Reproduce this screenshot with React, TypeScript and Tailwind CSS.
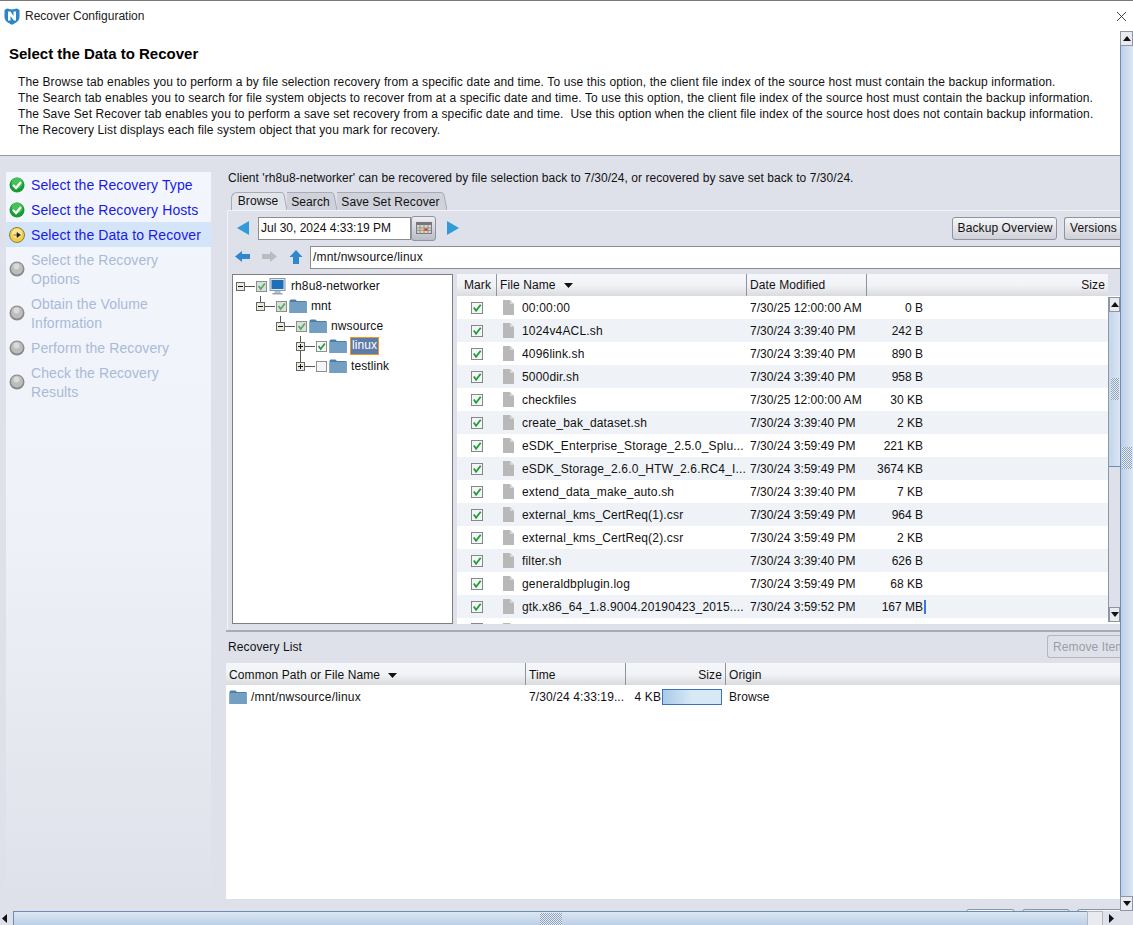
import type { ReactNode } from "react";
import { X } from "lucide-react";

const files = [
  ["00:00:00", "7/30/25 12:00:00 AM", "0 B"],
  ["1024v4ACL.sh", "7/30/24 3:39:40 PM", "242 B"],
  ["4096link.sh", "7/30/24 3:39:40 PM", "890 B"],
  ["5000dir.sh", "7/30/24 3:39:40 PM", "958 B"],
  ["checkfiles", "7/30/25 12:00:00 AM", "30 KB"],
  ["create_bak_dataset.sh", "7/30/24 3:39:40 PM", "2 KB"],
  ["eSDK_Enterprise_Storage_2.5.0_Splu...", "7/30/24 3:59:49 PM", "221 KB"],
  ["eSDK_Storage_2.6.0_HTW_2.6.RC4_I...", "7/30/24 3:59:49 PM", "3674 KB"],
  ["extend_data_make_auto.sh", "7/30/24 3:39:40 PM", "7 KB"],
  ["external_kms_CertReq(1).csr", "7/30/24 3:59:49 PM", "964 B"],
  ["external_kms_CertReq(2).csr", "7/30/24 3:59:49 PM", "2 KB"],
  ["filter.sh", "7/30/24 3:39:40 PM", "626 B"],
  ["generaldbplugin.log", "7/30/24 3:59:49 PM", "68 KB"],
  ["gtk.x86_64_1.8.9004.20190423_2015....", "7/30/24 3:59:52 PM", "167 MB"],
];

const steps = [
  { label: "Select the Recovery Type", state: "done", h: "h-[25px]" },
  { label: "Select the Recovery Hosts", state: "done", h: "h-[25px]" },
  { label: "Select the Data to Recover", state: "current", h: "h-[25px]" },
  { label: "Select the Recovery Options", state: "todo", h: "h-[44px]" },
  { label: "Obtain the Volume Information", state: "todo", h: "h-[44px]" },
  { label: "Perform the Recovery", state: "todo", h: "h-[25px]" },
  { label: "Check the Recovery Results", state: "todo", h: "h-[44px]" },
];

function Logo() {
  return (
    <svg width="16" height="17" viewBox="0 0 16 17">
      <path d="M0.5 2 L3 0.5 L8 1.5 L13 0.5 L15.5 2 V9 C15.5 13 11 15.5 8 16.8 C5 15.5 0.5 13 0.5 9 Z" fill="#2a86c4" />
      <path d="M4 12.5 V3.5 H6.5 L9.5 8 V3.5 H12 V12.5 H9.8 L6.5 8 V12.5 Z" fill="#fff" />
    </svg>
  );
}

function StepIcon({ state }: { state: string }) {
  if (state === "done") {
    return (
      <svg width="16" height="16" viewBox="0 0 16 16">
        <circle cx="8" cy="8" r="7.5" fill="#1a9a35" />
        <circle cx="8" cy="6" r="5.5" fill="#48c258" />
        <path d="M4 8 L7 11 L12 5" stroke="#fff" strokeWidth="2.2" fill="none" />
      </svg>
    );
  }
  if (state === "current") {
    return (
      <svg width="16" height="16" viewBox="0 0 16 16">
        <circle cx="8" cy="8" r="7.5" fill="#f4cb4a" stroke="#8a7a45" strokeWidth="1" />
        <circle cx="8" cy="6.5" r="5" fill="#fbe58c" />
        <path d="M4.5 8 H8 V5.5 L11.5 8 L8 10.5 V8" fill="#222" stroke="#222" strokeWidth="0.6" />
      </svg>
    );
  }
  return (
    <svg width="16" height="16" viewBox="0 0 16 16">
      <circle cx="8" cy="8" r="7.5" fill="#8a8a8a" />
      <circle cx="8" cy="7.5" r="6" fill="#bdbdbd" />
      <circle cx="7.5" cy="5.5" r="3" fill="#dadada" />
    </svg>
  );
}

function Folder() {
  return (
    <svg width="18" height="14" viewBox="0 0 18 14" className="shrink-0">
      <path d="M0.5 2 Q0.5 0.5 2 0.5 H6.5 L8 2 H17 Q17.7 2 17.7 3 V14 H0.5 Z" fill="#4d7fa6" />
      <rect x="0.5" y="3" width="17.2" height="11" fill="#739fc2" />
    </svg>
  );
}

function FileIcon() {
  return (
    <svg width="11" height="15" viewBox="0 0 11 15" className="shrink-0">
      <path d="M0 0 H7 L11 4 V15 H0 Z" fill="#b8b8b8" />
      <path d="M7 0 L11 4 H7 Z" fill="#d6d6d6" />
    </svg>
  );
}

function Check({ on = true, dim = false, size = 12 }: { on?: boolean; dim?: boolean; size?: number }) {
  return (
    <svg width={size} height={size} viewBox="0 0 13 13" className="shrink-0">
      <rect x="0.5" y="0.5" width="12" height="12" fill={dim ? "#d9dfd9" : "#f4f5f7"} stroke="#7f7f7f" />
      {on && <path d="M3 6 L5.5 9.5 L10.5 3" stroke={dim ? "#55a866" : "#1f9e35"} strokeWidth="2" fill="none" />}
    </svg>
  );
}

function Expander({ open, top = true, bottom = false }: { open: boolean; top?: boolean; bottom?: boolean }) {
  return (
    <svg width="21" height="20" viewBox="0 0 21 20" className="shrink-0">
      {top && <path d="M5.5 0 V6" stroke="#555" />}
      {bottom && <path d="M5.5 15 V20" stroke="#555" />}
      <path d="M10 10.5 H20" stroke="#555" />
      <rect x="1.5" y="6.5" width="8" height="8" fill="#eceae0" stroke="#666" />
      <path d="M3 10.5 H8" stroke="#111" />
      {!open && <path d="M5.5 8 V13" stroke="#111" />}
    </svg>
  );
}

function Tri({ dir, color }: { dir: "l" | "r"; color: string }) {
  return (
    <svg width="14" height="14" viewBox="0 0 14 14" className="shrink-0">
      <path d={dir === "l" ? "M13 0 V14 L1 7 Z" : "M1 0 V14 L13 7 Z"} fill={color} />
    </svg>
  );
}

function NavArrow({ kind }: { kind: "back" | "fwd" | "up" }) {
  const d =
    kind === "back"
      ? "M0 6.5 L7 1 V4 H15 V9 H7 V12 Z"
      : kind === "fwd"
        ? "M15 6.5 L8 1 V4 H0 V9 H8 V12 Z"
        : "M7 0 L13.5 7 H10 V14 H4 V7 H0.5 Z";
  return (
    <svg width="15" height="14" viewBox="0 0 15 14" className="shrink-0">
      <path d={d} fill={kind === "fwd" ? "#b9bcbf" : "#2f88cf"} />
    </svg>
  );
}

function TableHeadCell({ children, className = "" }: { children: ReactNode; className?: string }) {
  return <div className={`flex items-center h-full border-r border-[#8f949c] ${className}`}>{children}</div>;
}

function SortDown() {
  return (
    <svg width="9" height="5" viewBox="0 0 9 5" className="shrink-0">
      <path d="M0 0 H9 L4.5 5 Z" fill="#111" />
    </svg>
  );
}

function Grip({ className }: { className: string }) {
  return <div className={`bg-[repeating-conic-gradient(#8ea2bc_0_25%,#e6edf6_0_50%)] bg-[size:2px_2px] ${className}`} />;
}

function ArrowBtn({ up }: { up: boolean }) {
  return (
    <div className="h-[15px] shrink-0 bg-[#e9ebf0] border border-[#8e96a3] flex items-center justify-center">
      <svg width="8" height="5" viewBox="0 0 8 5">
        <path d={up ? "M0 5 H8 L4 0 Z" : "M0 0 H8 L4 5 Z"} fill="#111" />
      </svg>
    </div>
  );
}

function Tab({ label, width, active }: { label: string; width: string; active?: boolean }) {
  return (
    <div className={`flex h-[18px] ${width}`}>
      <div
        className={`flex-1 border-t border-[#a8abb3] flex items-center justify-center whitespace-nowrap pl-[3px] ${
          active ? "bg-[#e2e4eb] border-l rounded-tl-[6px] pb-[2px]" : "bg-[#cfd2da]"
        }`}
      >
        {label}
      </div>
      <svg width="6" height="18" viewBox="0 0 6 18" className="shrink-0">
        <path d="M0 0.5 Q2.5 0.5 3 3 L6 18 H0 Z" fill={active ? "#e2e4eb" : "#cfd2da"} />
        <path d="M0 0.5 Q2.5 0.5 3 3 L6 18" stroke="#a8abb3" fill="none" />
      </svg>
    </div>
  );
}

function Tree() {
  return (
    <div className="w-[221px] shrink-0 h-full bg-white border border-[#7f7f7f] pt-[1px] pl-[2px] text-[#111]">
      <div className="h-5 flex items-center">
        <Expander open top={false} />
        <Check dim size={11} />
        <svg width="17" height="17" viewBox="0 0 16 17" className="shrink-0 ml-[2px]">
          <rect x="0.5" y="0.5" width="15" height="12" fill="#dfe6ee" stroke="#8a97a6" />
          <rect x="2" y="2" width="12" height="9" fill="#1f6fb8" />
          <rect x="5" y="13" width="6" height="2" fill="#b8bec6" />
          <rect x="3" y="15" width="10" height="1.5" fill="#9aa3ae" />
        </svg>
        <span className="ml-[5px]">rh8u8-networker</span>
      </div>
      <div className="h-5 flex items-center pl-5">
        <Expander open />
        <Check dim size={11} />
        <div className="ml-[2px]">
          <Folder />
        </div>
        <span className="ml-[4px]">mnt</span>
      </div>
      <div className="h-5 flex items-center pl-10">
        <Expander open />
        <Check dim size={11} />
        <div className="ml-[2px]">
          <Folder />
        </div>
        <span className="ml-[4px]">nwsource</span>
      </div>
      <div className="h-5 flex items-center pl-[60px]">
        <Expander open={false} bottom />
        <Check size={11} />
        <div className="ml-[2px]">
          <Folder />
        </div>
        <span className="ml-[3px] px-[1px] h-[18px] leading-[15px] bg-[#5f7ca8] text-white border border-[#e89a1c]">linux</span>
      </div>
      <div className="h-5 flex items-center pl-[60px]">
        <Expander open={false} />
        <Check on={false} size={11} />
        <div className="ml-[2px]">
          <Folder />
        </div>
        <span className="ml-[4px]">testlink</span>
      </div>
    </div>
  );
}

function FileTable() {
  return (
    <div className="flex-1 flex flex-col min-w-0 h-full text-[#111] overflow-hidden">
      <div className="h-[22px] shrink-0 flex items-center bg-gradient-to-b from-[#f4f6f9] via-[#f1f3f6] to-[#d9dbdf] mr-[12px]">
        <TableHeadCell className="w-[40px] pl-[7px]">Mark</TableHeadCell>
        <TableHeadCell className="w-[250px] pl-[3px] gap-[8px]">
          File Name <SortDown />
        </TableHeadCell>
        <TableHeadCell className="w-[120px] pl-[3px]">Date Modified</TableHeadCell>
        <div className="flex-1 text-right pr-[3px]">Size</div>
      </div>
      <div className="flex flex-1 min-h-0">
        <div className="flex-1 min-w-0 overflow-hidden">
          {files.map((f, i) => (
            <div key={f[0]} className={`h-[23px] flex items-center ${i % 2 === 1 ? "bg-[#eff3f7]" : "bg-white"}`}>
              <div className="w-[39px] flex justify-center">
                <Check />
              </div>
              <div className="w-[26px] pl-[7px] flex">
                <FileIcon />
              </div>
              <div className="w-[228px] whitespace-nowrap overflow-hidden tracking-[0.17px]">{f[0]}</div>
              <div className="w-[120px] whitespace-nowrap tracking-[0.05px]">{f[1]}</div>
              <div className="w-[53px] text-right whitespace-nowrap tracking-normal">{f[2]}</div>
              {i === 13 && <div className="ml-[1px] w-[2px] h-[14px] bg-[#3b78d8]" />}
            </div>
          ))}
          <div className="h-[23px] flex bg-white pt-[5px]">
            <div className="w-[39px] flex justify-center">
              <Check />
            </div>
            <div className="pl-[7px]">
              <FileIcon />
            </div>
          </div>
        </div>
        <div className="w-[12px] shrink-0 flex flex-col bg-white pb-[2px]">
          <div className="flex-1 min-h-0 flex flex-col border-l border-[#8e96a3] mt-[1px]">
            <ArrowBtn up />
            <div className="flex-1 bg-[#dfe1ea] min-h-0 flex flex-col">
              <div className="h-[155px] bg-gradient-to-r from-[#c4d6ec] to-[#dbe6f3] border-b border-[#6d8bb3] flex flex-col items-center pt-[66px]">
                <Grip className="w-[8px] h-[22px]" />
              </div>
            </div>
            <ArrowBtn up={false} />
          </div>
        </div>
      </div>
    </div>
  );
}

export default function App() {
  return (
    <div className="w-[1133px] h-[925px] flex flex-col overflow-hidden bg-white border-t border-[#7a7a7a] font-['Liberation_Sans',Arial,sans-serif] text-[12px] text-[#111] tracking-[0.1px]">
      {/* window title */}
      <div className="h-[30px] shrink-0 flex items-center pl-[4px] pr-[3px]">
        <Logo />
        <span className="ml-[5px] text-[#222] tracking-normal">Recover Configuration</span>
        <X className="ml-auto w-[17px] h-[17px] text-[#222]" strokeWidth={1.2} />
      </div>

      <div className="flex-1 flex min-h-0">
        <div className="w-[1120px] shrink-0 flex flex-col overflow-hidden">
          {/* header text */}
          <div className="h-[125px] shrink-0 border-b border-[#9a9a9a] bg-white">
            <div className="pl-[9px] pt-[14px] text-[15px] leading-[18px] font-bold text-black tracking-normal">Select the Data to Recover</div>
            <div className="pl-[18px] pt-[11px] leading-[16px] text-[#111] whitespace-nowrap tracking-[0.115px]">
              <div>The Browse tab enables you to perform a by file selection recovery from a specific date and time. To use this option, the client file index of the source host must contain the backup information.</div>
              <div>The Search tab enables you to search for file system objects to recover from at a specific date and time. To use this option, the client file index of the source host must contain the backup information.</div>
              <div>The Save Set Recover tab enables you to perform a save set recovery from a specific date and time.&nbsp; Use this option when the client file index of the source host does not contain backup information.</div>
              <div>The Recovery List displays each file system object that you mark for recovery.</div>
            </div>
          </div>

          <div className="flex-1 flex min-h-0 bg-[#dfe1ea]">
            {/* wizard steps */}
            <div className="w-[226px] shrink-0 pl-[6px] pr-[15px] pt-[16px] pb-[5px]">
              <div className="h-full bg-gradient-to-b from-[#f3f7fd] via-[#eef1f7] to-[#dfe1ea]">
                {steps.map((s) => (
                  <div key={s.label} className={`${s.h} flex items-center pl-[3px] ${s.state === "current" ? "bg-[#d5e5f9]" : ""}`}>
                    <div className="w-[16px] shrink-0">
                      <StepIcon state={s.state} />
                    </div>
                    <div className={`ml-[6px] pt-[2px] w-[175px] text-[14px] leading-[19px] tracking-[0.1px] ${s.state === "todo" ? "text-[#a9bad8]" : "text-[#1a1ae6]"}`}>
                      {s.label}
                    </div>
                  </div>
                ))}
              </div>
            </div>

            {/* main column */}
            <div className="flex-1 min-w-0 flex flex-col">
              <div className="h-[36px] shrink-0 pl-[2px] pt-[14px] leading-[16px] tracking-[0.05px]">
                Client 'rh8u8-networker' can be recovered by file selection back to 7/30/24, or recovered by save set back to 7/30/24.
              </div>
              <div className="h-[18px] shrink-0 flex pl-[5px]">
                <Tab label="Browse" width="w-[56px]" active />
                <Tab label="Search" width="w-[50px]" />
                <Tab label="Save Set Recover" width="w-[110px]" />
              </div>

              <div className="h-[420px] shrink-0 border-t border-l border-[#f2f3f6] ml-[1px] flex flex-col">
                <div className="h-[34px] shrink-0 flex items-center pl-[8px]">
                  <Tri dir="l" color="#2f9bd8" />
                  <div className="ml-[8px] w-[153px] h-[23px] bg-white border border-[#8c8c8c] flex items-center pl-[2px] whitespace-nowrap tracking-normal">Jul 30, 2024 4:33:19 PM</div>
                  <div className="w-[25px] h-[25px] rounded-[3px] border border-[#8f949c] bg-gradient-to-b from-[#eceef2] to-[#b9bcc4] flex items-center justify-center">
                    <svg width="16" height="12" viewBox="0 0 16 12">
                      <rect x="0.5" y="0.5" width="15" height="11" fill="#d4d4d4" stroke="#777" />
                      <rect x="0" y="0" width="16" height="3" fill="#777" />
                      <path d="M0 6 H16 M0 8.5 H16 M4 3 V12 M8 3 V12 M12 3 V12" stroke="#888" strokeWidth="0.8" />
                      <rect x="8.5" y="6.5" width="3" height="2" fill="#d33" />
                      <rect x="4.5" y="6.5" width="3" height="2" fill="#e6c83c" />
                    </svg>
                  </div>
                  <div className="ml-[10px]">
                    <Tri dir="r" color="#2f9bd8" />
                  </div>
                  <div className="ml-auto flex gap-[7px] overflow-hidden">
                    <div className="w-[105px] h-[23px] rounded-[3px] border border-[#8f949c] bg-gradient-to-b from-[#f6f7f9] to-[#cfd1d8] flex items-center justify-center pl-[1px]">Backup Overview</div>
                    <div className="w-[56px] h-[23px] rounded-l-[3px] border border-r-0 border-[#8f949c] bg-gradient-to-b from-[#f6f7f9] to-[#cfd1d8] flex items-center pl-[5px]">Versions</div>
                  </div>
                </div>

                <div className="h-[24px] shrink-0 flex items-center pl-[7px]">
                  <NavArrow kind="back" />
                  <div className="ml-[12px]">
                    <NavArrow kind="fwd" />
                  </div>
                  <div className="ml-[12px]">
                    <NavArrow kind="up" />
                  </div>
                  <div className="ml-[6px] flex-1 h-[23px] bg-white border border-r-0 border-[#8c8c8c] flex items-center pl-[2px] tracking-[0.2px]">/mnt/nwsource/linux</div>
                </div>

                <div className="h-[350px] shrink-0 mt-[5px] flex pl-[4px] gap-[4px]">
                  <Tree />
                  <FileTable />
                </div>
              </div>

              <div className="border-t-[2px] border-[#a8abb3]" />

              <div className="h-[28px] shrink-0 flex items-center justify-between pl-[2px]">
                <span className="mt-[2px]">Recovery List</span>
                <div className="w-[73px] h-[23px] mt-[1px] rounded-l-[3px] border border-r-0 border-[#b4b7bf] flex items-center pl-[5px] text-[#9a9da3] whitespace-nowrap overflow-hidden">Remove Item</div>
              </div>

              <div className="h-[236px] shrink-0 mt-[3px] bg-white flex flex-col">
                <div className="h-[22px] shrink-0 flex items-center bg-gradient-to-b from-[#f4f6f9] via-[#f1f3f6] to-[#d9dbdf]">
                  <TableHeadCell className="w-[300px] pl-[3px] pt-[2px] gap-[8px]">
                    Common Path or File Name <SortDown />
                  </TableHeadCell>
                  <TableHeadCell className="w-[100px] pl-[3px] pt-[2px]">Time</TableHeadCell>
                  <TableHeadCell className="w-[100px] justify-end pr-[3px] pt-[2px]">Size</TableHeadCell>
                  <div className="pl-[3px] pt-[2px]">Origin</div>
                </div>
                <div className="h-[23px] flex items-center">
                  <div className="w-[300px] pl-[3px] flex items-center gap-[4px] tracking-[0.2px]">
                    <Folder />
                    /mnt/nwsource/linux
                  </div>
                  <div className="w-[100px] pl-[3px] whitespace-nowrap">7/30/24 4:33:19...</div>
                  <div className="w-[35px] text-right whitespace-nowrap">4 KB</div>
                  <div className="ml-[1px] w-[60px] h-[16px] border border-[#3a74b8] bg-gradient-to-r from-[#a9cae6] via-[#d8e9f6] to-[#d8e9f6]" />
                  <div className="pl-[7px]">Browse</div>
                </div>
              </div>

              {/* wizard buttons, cut off by the scroll pane */}
              <div className="flex-1 min-h-0 flex justify-end gap-[7px] pt-[10px] overflow-hidden">
                <div className="w-[49px] h-[10px] rounded-t-[3px] border border-[#8f949c] bg-[#f4f5f8]" />
                <div className="w-[48px] h-[10px] rounded-t-[3px] border border-[#8f949c] bg-[#dfe1ea]" />
                <div className="w-[43px] h-[10px] rounded-tl-[3px] border border-r-0 border-[#8f949c] bg-[#f4f5f8]" />
              </div>
            </div>
          </div>
        </div>

        {/* outer vertical scrollbar */}
        <div className="w-[13px] shrink-0 flex flex-col">
          <ArrowBtn up />
          <div className="flex-1 min-h-0 bg-gradient-to-r from-[#bcd0e8] to-[#dce7f4] border-l border-[#6d8bb3] flex flex-col items-center justify-center">
            <Grip className="w-[10px] h-[22px] mb-[26px]" />
          </div>
          <ArrowBtn up={false} />
        </div>
      </div>

      {/* outer horizontal scrollbar */}
      <div className="h-[14px] shrink-0 flex bg-[#dfe1ea]">
        <div className="w-[13px] flex items-center pl-[2px]">
          <svg width="5" height="9" viewBox="0 0 5 9">
            <path d="M5 0 V9 L0 4.5 Z" fill="#111" />
          </svg>
        </div>
        <div className="w-[1074px] border-t border-l border-[#6d8bb3] bg-gradient-to-b from-[#dce7f4] to-[#bcd0e8] flex items-center justify-center">
          <Grip className="w-[22px] h-[12px]" />
        </div>
        <div className="w-[16px] border-x border-t border-[#b4b7bf] bg-[#e9ebf0]" />
        <div className="w-[16px] flex items-center justify-center">
          <svg width="5" height="9" viewBox="0 0 5 9">
            <path d="M0 0 V9 L5 4.5 Z" fill="#111" />
          </svg>
        </div>
      </div>
    </div>
  );
}
